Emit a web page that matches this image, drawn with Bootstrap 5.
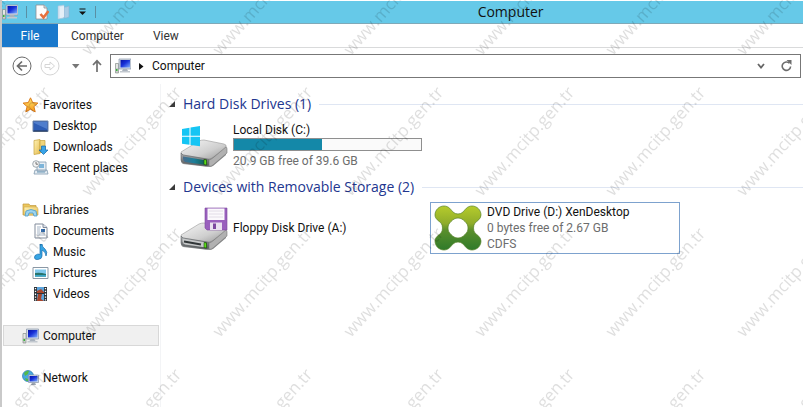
<!DOCTYPE html>
<html lang="en">
<head>
<meta charset="utf-8">
<meta name="viewport" content="width=device-width, initial-scale=1">
<title>Computer</title>
<link href="https://cdn.jsdelivr.net/npm/bootstrap@5.3.0/dist/css/bootstrap.min.css" rel="stylesheet">
<style>
body{font-family:Roboto,"Open Sans",sans-serif;font-size:12px;line-height:16px;color:#111;background:#fff}
svg{display:block;flex:none}
button{font:inherit;color:inherit;background:none;border:0;padding:0}
.explorer{border-left:2px solid #c9c9c9;padding-top:1px}
.titlebar{height:23px;background:#66c9e8;border-bottom:1px solid #7fa9b8}
.quick{flex:11 1 0}
.title-text{font-family:"Open Sans",sans-serif;font-size:14px;line-height:20px;font-weight:400;margin:0}
.title-space{flex:6 1 0}
.bar-sep{width:1px;height:12px;background:#5a90a4}
.ribbon{height:24px;border-bottom:1px solid #d9dadb;color:#333;gap:13px}
.file-tab{background:#1a79cc;color:#fff;width:56px}
.address{padding:6px 2px 6px 10px}
.path-box{height:24px;border:1px solid #777;color:#111}
.side{width:159px;border-right:1px solid #f3f4f6;padding:10px 1px 0}
.side ul{margin:0 0 21px}
.side a{height:21px;color:#111;border:1px solid transparent;padding-left:18px}
.side a.sub{padding-left:28px}
.side a.current{background:#f0f0f0;border-color:#d8d8d8}
.group-title{font-family:"Open Sans",sans-serif;font-size:14px;line-height:20px;font-weight:400;color:#22368f;margin:0}
.group-line{height:1px;background:#dfe6f3}
.content{padding:10px 0 0 8px}
.tiles{gap:4px;padding:5px 0 0 7px;margin-bottom:6px}
.tile{width:250px;height:52px;border:1px solid transparent;gap:5px;padding:0 3px;color:#111}
.tile.focused{border-color:#7da2ce}
.muted{color:#6d6d6d}
.space-bar{height:13px;border:1px solid #8f8f8f;border-radius:0;background:#fafafa;width:189px;margin-bottom:2px}
.space-fill{background:#1488a8}
.watermark{position:absolute;inset:0;width:100%;height:100%;pointer-events:none}
.watermark text{font-family:"Open Sans",sans-serif;font-size:17px;fill:#000;fill-opacity:.13}
</style>
<script src="https://cdn.jsdelivr.net/npm/bootstrap@5.3.0/dist/js/bootstrap.bundle.min.js"></script>
</head>
<body>
<svg width="0" height="0" class="position-absolute" aria-hidden="true">
  <defs>
    <linearGradient id="screen" x1="0" y1="0" x2="1" y2="1"><stop offset="0" stop-color="#0712a5"/><stop offset=".45" stop-color="#1730d8"/><stop offset="1" stop-color="#7fb0ff"/></linearGradient>
    <linearGradient id="metal" x1="0" y1="0" x2="1" y2="1"><stop offset="0" stop-color="#f6f6f6"/><stop offset=".6" stop-color="#cfcfcf"/><stop offset="1" stop-color="#989898"/></linearGradient>
    <linearGradient id="front" x1="0" y1="0" x2="0" y2="1"><stop offset="0" stop-color="#aeb1b3"/><stop offset="1" stop-color="#505456"/></linearGradient>
    <linearGradient id="teal" x1="0" y1="0" x2="1" y2="0"><stop offset="0" stop-color="#4b6c8c"/><stop offset=".5" stop-color="#1d7f9b"/><stop offset="1" stop-color="#135f52"/></linearGradient>
    <linearGradient id="green" x1="0" y1="0" x2="0" y2="1"><stop offset="0" stop-color="#b6cc2c"/><stop offset=".4" stop-color="#8fac2a"/><stop offset=".55" stop-color="#5a8f2c"/><stop offset="1" stop-color="#2f7a2a"/></linearGradient>
    <linearGradient id="folder" x1="0" y1="0" x2="1" y2="1"><stop offset="0" stop-color="#fff3b5"/><stop offset="1" stop-color="#e5bc52"/></linearGradient>
    <linearGradient id="gold" x1="0" y1="0" x2="0" y2="1"><stop offset="0" stop-color="#ffe46b"/><stop offset="1" stop-color="#f79a1d"/></linearGradient>
    <symbol id="pc" viewBox="0 0 16 16">
      <path d="M0.500 5.500h3v9.500h-3z" fill="#c9cdc9" stroke="#8d938f" stroke-width=".7"/><path d="M1 7h2M1 9h2" stroke="#fff"/><path d="M1 11h1.500v2H1z" fill="#3ab53c"/>
      <path d="M4 1h12v10H4z" fill="#d5dbe4" stroke="#8795aa" stroke-width=".7"/><path d="M5.500 2h9.500v7.500H5.500z" fill="url(#screen)"/>
      <path d="M8 11h4l1 2H7z" fill="#a9b2bd"/><path d="M5 13h10v1.500H5z" fill="#c2c8cf"/>
    </symbol>
    <symbol id="drive" viewBox="0 0 48 28">
      <path d="M1 17v5q0 2 2 3l26 3q2 0 4-1l13-11V9L31 19z" fill="#4f5253" opacity=".65"/>
      <path d="M1 13L19 2q2-1 5-1l20 4q3 1 2 3L32 19q-2 1-5 1L3 16q-2-1-2-3z" fill="url(#metal)" stroke="#999" stroke-width=".6"/>
      <path d="M1 14l2 2 24 4q2 0 2 2v4q0 1-3 1L4 24q-3-1-3-3z" fill="url(#front)" stroke="#63676a" stroke-width=".6"/>
      <path d="M29 21q3-1 5-3L46 8q1 0 1 2v4L33 26q-2 2-4 1z" fill="#b1b1b1" stroke="#777" stroke-width=".6"/>
      <path d="M24 20.500l2.500.4v5L24 25.500z" fill="#55d51a" stroke="#1f4b14" stroke-width=".7"/>
    </symbol>
    <symbol id="collapse" viewBox="0 0 6 6"><path d="M6 0v6H0z" fill="#3b3b3b"/></symbol>
  </defs>
</svg>

<div class="explorer position-relative overflow-hidden min-vh-100">
  <header>
    <div class="titlebar d-flex align-items-center">
      <div class="quick d-flex align-items-center">
        <svg width="16" height="16"><use href="#pc"/></svg>
        <span class="bar-sep mx-2"></span>
        <button aria-label="Properties"><svg width="14" height="16" viewBox="0 0 14 16"><path d="M1 1h8l3 3v11H1z" fill="#fdfdfd" stroke="#8c9196" stroke-width=".8"/><path d="M9 1v3h3" fill="#ddd" stroke="#8c9196" stroke-width=".8"/><path d="M5.500 10l3 3.500L13.500 7" fill="none" stroke="#e6703d" stroke-width="2.600"/></svg></button>
        <button class="ms-2" aria-label="New folder"><svg width="13" height="16" viewBox="0 0 13 16"><path d="M1 2l6-1v13l-6 1z" fill="#d5e5f2" stroke="#a5c5db" stroke-width=".6"/><path d="M7 3h2l3-1v11l-3 1H7z" fill="#a9cce6" stroke="#89b3d0" stroke-width=".6"/><path d="M3 3l4-1v11l-4 1z" fill="#e5eff7"/></svg></button>
        <button class="ms-2" aria-label="Customize toolbar"><svg width="9" height="8" viewBox="0 0 9 8"><path d="M1.500 1h6" stroke="#111"/><path d="M1 3.500h7L4.500 7z" fill="#111"/></svg></button>
        <span class="bar-sep ms-2"></span>
      </div>
      <h1 class="title-text">Computer</h1>
      <div class="title-space"></div>
    </div>
    <nav class="ribbon d-flex" aria-label="Ribbon">
      <button class="file-tab">File</button>
      <button class="me-3">Computer</button>
      <button>View</button>
    </nav>
    <div class="address d-flex align-items-center">
      <button aria-label="Back"><svg width="20" height="20" viewBox="0 0 20 20" fill="none" stroke="#6b6b6b"><circle cx="10" cy="10" r="9"/><path d="M15 10H6M10 5.500L5.500 10l4.500 4.500" stroke-width="1.700"/></svg></button>
      <button class="ms-2" aria-label="Forward"><svg width="20" height="20" viewBox="0 0 20 20" fill="none" stroke="#d5d5d5"><circle cx="10" cy="10" r="9"/><path d="M5 8.500h5V6l4.500 4-4.500 4v-2.500H5z"/></svg></button>
      <button class="ms-2 px-1" aria-label="Recent locations"><svg width="8" height="5" viewBox="0 0 8 5"><path d="M0 0h7.500L3.800 4.500z" fill="#777"/></svg></button>
      <button class="mx-1 px-1" aria-label="Up"><svg width="10" height="14" viewBox="0 0 10 14" fill="none" stroke="#707070" stroke-width="1.700"><path d="M5 13V2M1 6l4-4.200L9 6"/></svg></button>
      <div class="path-box d-flex flex-fill align-items-center px-1">
        <svg class="me-2" width="16" height="16"><use href="#pc"/></svg>
        <svg width="5" height="7" viewBox="0 0 5 7"><path d="M0 0v7l4.500-3.500z" fill="#111"/></svg>
        <button class="ms-2">Computer</button>
        <button class="ms-auto px-1" aria-label="Previous locations"><svg width="8" height="6" viewBox="0 0 8 6"><path d="M1 1l3 3.500L7 1" fill="none" stroke="#666" stroke-width="1.800"/></svg></button>
        <button class="ms-2 px-1" aria-label="Refresh"><svg width="11" height="12" viewBox="0 0 11 12"><path d="M8.500 3.300A4.200 4.200 0 1 0 9.600 6.500" fill="none" stroke="#6d6d6d" stroke-width="1.600"/><path d="M5.500 0h5v5z" fill="#6d6d6d"/></svg></button>
      </div>
    </div>
  </header>

  <div class="d-flex">
    <nav class="side flex-shrink-0" aria-label="Locations">
      <ul class="list-unstyled">
        <li><a href="#favorites" class="d-flex align-items-center text-decoration-none"><svg class="me-1" width="17" height="16" viewBox="0 0 16 16"><path d="M8 .8l2.200 4.800 5.200.5-4 3.500 1.300 5.300L8 12.200l-4.700 2.700 1.300-5.300-4-3.500 5.200-.5z" fill="url(#gold)" stroke="#dc7b19"/></svg>Favorites</a></li>
        <li><a href="#desktop" class="sub d-flex align-items-center text-decoration-none"><svg class="me-1" width="17" height="16" viewBox="0 0 17 16"><path d="M1 3h15v10.500H1z" fill="#2e5db5" stroke="#6d84a8"/><path d="M2 4h13v7L2 5z" fill="#7ba7ea" opacity=".45"/><path d="M1.500 13h14" stroke="#26364f"/></svg>Desktop</a></li>
        <li><a href="#downloads" class="sub d-flex align-items-center text-decoration-none"><svg class="me-1" width="17" height="16" viewBox="0 0 17 16"><path d="M2 1.500l6-1v14l-6 1z" fill="url(#folder)" stroke="#c6a23b" stroke-width=".7"/><path d="M8 1.500h5v12H8z" fill="#f0d47a" stroke="#c6a23b" stroke-width=".7"/><path d="M9.500 7h4v4H16l-4.500 4.500L7 11h2.500z" fill="#38a4e8" stroke="#1467a9" stroke-width=".7"/></svg>Downloads</a></li>
        <li><a href="#recent" class="sub d-flex align-items-center text-decoration-none"><svg class="me-1" width="17" height="16" viewBox="0 0 17 16"><path d="M5 2h9v9H5zM3 10l12 0 1 4H2z" fill="#e6edf3" stroke="#829baf" stroke-width=".8"/><path d="M7 4h5v4H7z" fill="#7db4d9"/><path d="M5 12h8" stroke="#6997b6"/><circle cx="4" cy="4" r="3.300" fill="#f4f4f4" stroke="#8c969d" stroke-width=".8"/><path d="M4 2v2.200h2" fill="none" stroke="#555" stroke-width=".8"/></svg>Recent places</a></li>
      </ul>
      <ul class="list-unstyled">
        <li><a href="#libraries" class="d-flex align-items-center text-decoration-none"><svg class="me-1" width="17" height="16" viewBox="0 0 17 16"><path d="M1 2h6l1 1.500h6V13H1z" fill="#ecc75e" stroke="#c19a3c" stroke-width=".7"/><path d="M2 5h13l1 2v6H2z" fill="url(#folder)" stroke="#cda74b" stroke-width=".6"/><path d="M3 14l1-5q5-3 10 0l1 5h-3l-1-3H7l-1 3z" fill="#9cd3ef" stroke="#4b9ccd" stroke-width=".8"/></svg>Libraries</a></li>
        <li><a href="#documents" class="sub d-flex align-items-center text-decoration-none"><svg class="me-1" width="17" height="16" viewBox="0 0 17 16"><path d="M3 1h8l4 3.500V15H3z" fill="#fff" stroke="#818b9b"/><path d="M11 1v3.500h4" fill="#dde3ec" stroke="#818b9b"/><path d="M5 4h4M5 6h3M5 8h3M5 10h8M5 12h8" stroke="#9babbf" stroke-width=".9"/><path d="M9 6h4v3H9z" fill="#376fae"/></svg>Documents</a></li>
        <li><a href="#music" class="sub d-flex align-items-center text-decoration-none"><svg class="me-1" width="17" height="16" viewBox="0 0 17 16"><path d="M8 0h2q0 3 3 5 3 3 1 7 0-4-4-6v6q0 3-4 3.500-3 .5-3.500-1.500Q2 11 5.500 10.200q1.500-.3 2.500.3z" fill="#37a5e4" stroke="#1b6fae" stroke-width=".7"/></svg>Music</a></li>
        <li><a href="#pictures" class="sub d-flex align-items-center text-decoration-none"><svg class="me-1" width="17" height="16" viewBox="0 0 17 16"><path d="M1 2.500h15v11H1z" fill="#fff" stroke="#8b98a5"/><path d="M3 4.500h11v7H3z" fill="#7fc8ed"/><path d="M3 8q5-1 11 1v2.500H3z" fill="#28746c"/><path d="M3 10h11v1.500H3z" fill="#38a6ca"/></svg>Pictures</a></li>
        <li><a href="#videos" class="sub d-flex align-items-center text-decoration-none"><svg class="me-1" width="17" height="16" viewBox="0 0 17 16"><path d="M2 1h13v14H2z" fill="#2d3237"/><path d="M5 1h7v6H5zM5 8h7v7H5z" fill="#5ba4dd"/><path d="M5 5l4-2 3 3v1H5zM6 8h4l-1 5 3 2H5z" fill="#a8462d"/><path d="M3.500 2v13M13.500 2v13" stroke="#fff" stroke-width="1.300" stroke-dasharray="1.300 1.500"/></svg>Videos</a></li>
      </ul>
      <ul class="list-unstyled">
        <li><a href="#computer" class="current d-flex align-items-center text-decoration-none" aria-current="page"><svg class="me-1" width="17" height="16"><use href="#pc"/></svg>Computer</a></li>
      </ul>
      <ul class="list-unstyled">
        <li><a href="#network" class="d-flex align-items-center text-decoration-none"><svg class="me-1" width="17" height="16" viewBox="0 0 17 16"><circle cx="6" cy="6" r="5.500" fill="#48a8df" stroke="#2779ae" stroke-width=".7"/><path d="M2 3q3-3 5-2l-1 3-3 2zM3 8l3 1v2H4z" fill="#54b94a"/><path d="M6.500 5h10v7.500h-10z" fill="#d8dfe9" stroke="#8492a8" stroke-width=".7"/><path d="M7.500 6h8v5.500h-8z" fill="url(#screen)"/><path d="M10 12.500h3l1 2.500H9z" fill="#9da6b3"/></svg>Network</a></li>
      </ul>
    </nav>

    <main class="content flex-fill">
      <section>
        <div class="d-flex align-items-center">
          <button aria-label="Collapse Hard Disk Drives"><svg width="6" height="6"><use href="#collapse"/></svg></button>
          <h2 class="group-title ms-2">Hard Disk Drives (1)</h2>
          <div class="group-line flex-fill ms-2"></div>
        </div>
        <div class="tiles d-flex flex-wrap">
          <div class="tile d-flex align-items-center">
            <svg width="48" height="46" viewBox="0 0 48 46"><use href="#drive" y="17" width="48" height="28"/><path d="M3 34.500l22 3.700v4.500L5 40q-2-1-2-3z" fill="url(#teal)"/><path d="M24 37.500l2.500.4v5L24 42.500z" fill="#5cdd19" stroke="#1f4b14" stroke-width=".6"/><path d="M2 7l7.500-1.200v8H2zM10.500 5.600L20 4v9.800h-9.500zM2 14.800h7.500v8L2 21.800zM10.500 14.800H20v9.500L10.500 23z" fill="#15c5f4"/></svg>
            <div>
              <div>Local Disk (C:)</div>
              <div class="progress space-bar" role="progressbar" aria-label="Used space" aria-valuenow="47" aria-valuemin="0" aria-valuemax="100"><div class="progress-bar space-fill" style="width:47%"></div></div>
              <div class="muted">20.9 GB free of 39.6 GB</div>
            </div>
          </div>
        </div>
      </section>
      <section>
        <div class="d-flex align-items-center">
          <button aria-label="Collapse Devices with Removable Storage"><svg width="6" height="6"><use href="#collapse"/></svg></button>
          <h2 class="group-title ms-2">Devices with Removable Storage (2)</h2>
          <div class="group-line flex-fill ms-2"></div>
        </div>
        <div class="tiles d-flex flex-wrap">
          <div class="tile d-flex align-items-center">
            <svg width="48" height="46" viewBox="0 0 48 46"><use href="#drive" y="17" width="48" height="28"/><path d="M2.500 33.500l22 3.700v5L5 39.500q-2-1-2.500-3z" fill="#c6c8c9"/><path d="M4 36.500l17 3" stroke="#313638" stroke-width="2"/><path d="M24 37.500l2.500.4v5L24 42.500z" fill="#5cdd19" stroke="#1f4b14" stroke-width=".6"/><path d="M25 3h22v22H27l-2-2z" fill="#9960bd" stroke="#7c489f" stroke-width=".6"/><path d="M27.500 3.500h17V15h-17z" fill="#fbf9fc"/><path d="M29 6h14M29 9h14M29 12h14" stroke="#ddd7e2" stroke-width=".8"/><path d="M30 17.500h12v7.500H30z" fill="#e9e0ef"/><path d="M33 18.500h3v5.500h-3z" fill="#7c489f"/></svg>
            <div>Floppy Disk Drive (A:)</div>
          </div>
          <div class="tile focused d-flex align-items-center">
            <svg width="48" height="46" viewBox="0 0 48 46"><path fill-rule="evenodd" d="M10 1C15 1 17 5 19 7Q21 9 24 9T29 7C31 5 33 1 38 1C43 1 47 5 47 10C47 14 43 16 41 18Q39.500 20 39.500 23T41 28C43 30 47 32 47 36C47 41 43 45 38 45C33 45 31 41 29 39Q27 37 24 37T19 39C17 41 15 45 10 45C5 45 1 41 1 36C1 32 5 30 7 28Q8.500 26 8.500 23T7 18C5 16 1 14 1 10C1 5 5 1 10 1ZM24 13C21 13 19 14.500 17 16.500S14 20 14 23S15 27.500 17 29.500S21 33 24 33S29 31.500 31 29.500S34 26 34 23S33 18.500 31 16.500S27 13 24 13Z" fill="url(#green)" stroke="#58822a" stroke-width=".7"/></svg>
            <div>
              <div>DVD Drive (D:) XenDesktop</div>
              <div class="muted">0 bytes free of 2.67 GB</div>
              <div class="muted">CDFS</div>
            </div>
          </div>
        </div>
      </section>
    </main>
  </div>

  <svg class="watermark">
    <defs>
      <pattern id="marks" x="203" y="221" width="131" height="141" patternUnits="userSpaceOnUse">
        <text transform="translate(15 117) rotate(-48)">www.mcitp.gen.tr</text>
      </pattern>
    </defs>
    <rect width="100%" height="100%" fill="url(#marks)"/>
  </svg>
</div>
</body>
</html>
